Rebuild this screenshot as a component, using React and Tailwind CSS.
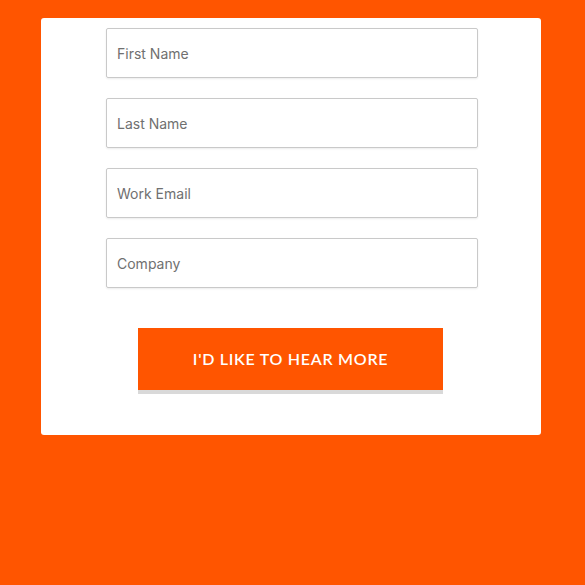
import React from "react";

export default function App() {
  const fields = ["First Name", "Last Name", "Work Email", "Company"];
  return (
    <div className="w-[585px] h-[585px] bg-[#ff5500] pt-[18px] pl-[41px]">
      <div className="w-[500px] h-[417px] bg-white rounded-[3px] flex flex-col items-center pt-[10px]">
        <div className="flex flex-col gap-[20px] w-[372px] ml-[2px]">
          {fields.map((f) => (
            <input
              key={f}
              placeholder={f}
              className="h-[50px] w-full border border-[#c9c9c9] rounded-[2px] shadow-[0_1px_2px_rgba(0,0,0,0.08)] px-[10px] text-[14px] text-[#555] placeholder:text-[#707070] outline-none"
              style={{ fontFamily: "Inter, 'Noto Sans', sans-serif" }}
            />
          ))}
        </div>
        <button
          className="mt-[40px] w-[305px] h-[62px] bg-[#ff5500] text-white text-[16px] tracking-[0.045em] shadow-[0_4px_0_#d9d9d9] ml-[-1px]"
          style={{ fontFamily: "Lato, 'Open Sans', sans-serif", fontWeight: 600 }}
        >
          I'D LIKE TO HEAR MORE
        </button>
      </div>
    </div>
  );
}
